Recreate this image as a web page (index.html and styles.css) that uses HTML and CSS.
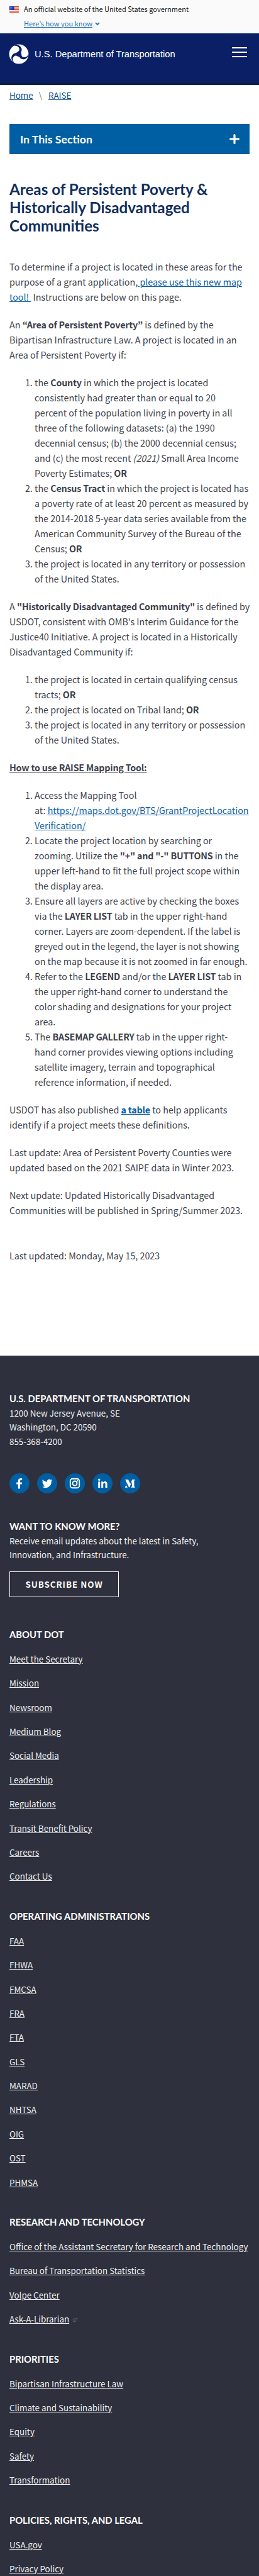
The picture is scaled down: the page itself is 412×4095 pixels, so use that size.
FILE: index.html
```html
<!DOCTYPE html>
<html lang="en">
<head>
<meta charset="utf-8">
<meta name="viewport" content="width=device-width, initial-scale=1">
<title>Areas of Persistent Poverty &amp; Historically Disadvantaged Communities</title>
<link rel="stylesheet" href="styles.css">
</head>
<body>
<div class="banner">
  <svg class="flag" viewBox="0 0 15 11"><rect width="15" height="11" fill="#fff"/><path d="M0 .6h15M0 2.9h15M0 5.2h15M0 7.7h15M0 10.2h15" stroke="#db3e1f" stroke-width="1.4"/><rect width="7.5" height="6" fill="#1e33b1"/><path d="M1 1.5h6M1 3h6M1 4.5h6" stroke="#9aa6e0" stroke-width=".6" stroke-dasharray="1 1"/></svg>
  <div class="banner-text">
    <p class="official">An official website of the United States government</p>
    <a class="know" href="#"><span>Here’s how you know</span><svg viewBox="0 0 8 6"><path d="M1 1.2l3 3 3-3" fill="none" stroke="#2672b5" stroke-width="1.9"/></svg></a>
  </div>
</div>
<header class="header">
  <a class="brand" href="#">
    <svg class="logo" viewBox="-16 -16 32 32"><defs><path id="arm" d="M-4.2 2.6C-5-1.5 2-4 .6-8.8C-.3-12-3.5-13.8-8.1-13.1C-3-16 2.4-13.6 4.1-9.5C5.8-5.2 2.2-3.3 4.6 1.4Z"/></defs><circle r="15.4" fill="#fff"/><g fill="#0a1f66"><use href="#arm"/><use href="#arm" transform="rotate(120)"/><use href="#arm" transform="rotate(240)"/></g></svg>
    <span>U.S. Department of Transportation</span>
  </a>
  <button class="menu" aria-label="Menu"><i></i><i></i><i></i></button>
</header>
<nav class="crumbs"><a href="#">Home</a><span>\</span><a href="#">RAISE</a></nav>
<div class="section-bar"><span>In This Section</span><svg viewBox="0 0 16 16"><path d="M8 1.600v12.800M1.600 8h12.800" stroke="#fff" stroke-width="3.200" stroke-linecap="round"/></svg></div>
<main class="content">
  <h1>Areas of Persistent Poverty &amp; Historically Disadvantaged Communities</h1>
  <p>To determine if a project is located in these areas for the<br>purpose of a grant application,<a href="#">&nbsp;please use this new map<br>tool!&nbsp;</a>&nbsp;Instructions are below on this page.</p>
  <p>An <b>“Area of Persistent Poverty”</b> is defined by the<br>Bipartisan Infrastructure Law. A project is located in an<br>Area of Persistent Poverty if:</p>
  <ol>
    <li>the <b>County</b> in which the project is located<br>consistently had greater than or equal to 20<br>percent of the population living in poverty in all<br>three of the following datasets: (a) the 1990<br>decennial census; (b) the 2000 decennial census;<br>and (c) the most recent <em>(2021)</em> Small Area Income<br>Poverty Estimates; <b>OR</b></li>
    <li>the <b>Census Tract</b> in which the project is located has<br>a poverty rate of at least 20 percent as measured by<br>the 2014-2018 5-year data series available from the<br>American Community Survey of the Bureau of the<br>Census; <b>OR</b></li>
    <li>the project is located in any territory or possession<br>of the United States.</li>
  </ol>
  <p>A <b>"Historically Disadvantaged Community"</b> is defined by<br>USDOT, consistent with OMB's Interim Guidance for the<br>Justice40 Initiative. A project is located in a Historically<br>Disadvantaged Community if:</p>
  <ol>
    <li>the project is located in certain qualifying census<br>tracts; <b>OR</b></li>
    <li>the project is located on Tribal land; <b>OR</b></li>
    <li>the project is located in any territory or possession<br>of the United States.</li>
  </ol>
  <p><b><u>How to use RAISE Mapping Tool:</u></b></p>
  <ol>
    <li>Access the Mapping Tool<br>at: <a href="#">https://maps.dot.gov/BTS/GrantProjectLocation<br>Verification/</a></li>
    <li>Locate the project location by searching or<br>zooming. Utilize the <b>"+" and "-" BUTTONS</b> in the<br>upper left-hand to fit the full project scope within<br>the display area.</li>
    <li>Ensure all layers are active by checking the boxes<br>via the <b>LAYER LIST</b> tab in the upper right-hand<br>corner. Layers are zoom-dependent. If the label is<br>greyed out in the legend, the layer is not showing<br>on the map because it is not zoomed in far enough.</li>
    <li>Refer to the <b>LEGEND</b> and/or the <b>LAYER LIST</b> tab in<br>the upper right-hand corner to understand the<br>color shading and designations for your project<br>area.</li>
    <li>The <b>BASEMAP GALLERY</b> tab in the upper right-<br>hand corner provides viewing options including<br>satellite imagery, terrain and topographical<br>reference information, if needed.</li>
  </ol>
  <p>USDOT has also published <a href="#"><b>a table</b></a> to help applicants<br>identify if a project meets these definitions.</p>
  <p>Last update: Area of Persistent Poverty Counties were<br>updated based on the 2021 SAIPE data in Winter 2023.</p>
  <p>Next update: Updated Historically Disadvantaged<br>Communities will be published in Spring/Summer 2023.</p>
  <p class="updated">Last updated: Monday, May 15, 2023</p>
</main>
<footer class="footer">
  <h2>U.S. Department of Transportation</h2>
  <p>1200 New Jersey Avenue, SE<br>Washington, DC 20590<br>855-368-4200</p>
  <div class="social">
    <a href="#" aria-label="Facebook"><svg viewBox="0 0 32 32"><path d="M13.8 24.5V17.4h-2.6v-3h2.6v-2.3c0-2.7 1.6-4.1 4-4.1 1.1 0 2 .1 2.4.2v2.7h-1.6c-1.3 0-1.6.6-1.6 1.500v2h3.1l-.4 3H17v7.1z"/></svg></a>
    <a href="#" aria-label="Twitter"><svg viewBox="0 0 32 32"><path d="M24.4 11.1c-.6.3-1.3.5-2 .6.7-.4 1.2-1.1 1.5-1.9-.7.4-1.4.7-2.2.8a3.4 3.4 0 0 0-5.8 3.1c-2.8-.1-5.3-1.5-7-3.6-.9 1.6-.5 3.6 1 4.6-.5 0-1.1-.2-1.5-.4 0 1.7 1.2 3.1 2.7 3.4-.5.1-1 .2-1.5.1.4 1.4 1.7 2.3 3.2 2.4A6.9 6.9 0 0 1 7.7 21.600a9.7 9.7 0 0 0 15-8.700c.7-.5 1.200-1.100 1.700-1.800z"/></svg></a>
    <a href="#" aria-label="Instagram"><svg viewBox="0 0 32 32"><g fill="none" stroke="#fff" stroke-width="1.900"><rect x="8.800" y="8.800" width="14.400" height="14.400" rx="3.500"/><circle cx="16" cy="16" r="3.500"/></g><circle cx="20.100" cy="11.900" r="1.100"/></svg></a>
    <a href="#" aria-label="LinkedIn"><svg viewBox="0 0 32 32"><path d="M9.200 13.300h3V23h-3zM14.200 13.300h2.900v1.300c.5-.9 1.500-1.600 3-1.600 2.800 0 3.500 1.700 3.500 4.300V23h-3v-5.100c0-1.300-.2-2.500-1.600-2.500s-1.800 1-1.800 2.400V23h-3z"/><circle cx="10.700" cy="10.300" r="1.800"/></svg></a>
    <a href="#" aria-label="Medium"><svg viewBox="0 0 32 32"><path d="M8.300 10h4.700l3.300 7 3-7h4.500v.8l-1.400 1.100v8.900l1.400 1.100v.8h-6.400v-.8l1.500-1.100v-7.400l-4 9.200h-.7l-4.200-9.200v6.300l1.700 2.200v.8H7.900v-.8l1.600-2.200v-7.800l-1.200-1.100z"/></svg></a>
  </div>
  <h2>Want To Know More?</h2>
  <p>Receive email updates about the latest in Safety,<br>Innovation, and Infrastructure.</p>
  <a class="subscribe" href="#">SUBSCRIBE NOW</a>
  <section class="links">
    <h2>About DOT</h2>
    <ul><li><a href="#">Meet the Secretary</a></li><li><a href="#">Mission</a></li><li><a href="#">Newsroom</a></li><li><a href="#">Medium Blog</a></li><li><a href="#">Social Media</a></li><li><a href="#">Leadership</a></li><li><a href="#">Regulations</a></li><li><a href="#">Transit Benefit Policy</a></li><li><a href="#">Careers</a></li><li><a href="#">Contact Us</a></li></ul>
  </section>
  <section class="links">
    <h2>Operating Administrations</h2>
    <ul><li><a href="#">FAA</a></li><li><a href="#">FHWA</a></li><li><a href="#">FMCSA</a></li><li><a href="#">FRA</a></li><li><a href="#">FTA</a></li><li><a href="#">GLS</a></li><li><a href="#">MARAD</a></li><li><a href="#">NHTSA</a></li><li><a href="#">OIG</a></li><li><a href="#">OST</a></li><li><a href="#">PHMSA</a></li></ul>
  </section>
  <section class="links">
    <h2>Research and Technology</h2>
    <ul><li><a href="#">Office of the Assistant Secretary for Research and Technology</a></li><li><a href="#">Bureau of Transportation Statistics</a></li><li><a href="#">Volpe Center</a></li><li><a href="#">Ask-A-Librarian</a><svg class="ext" viewBox="0 0 10 8"><path d="M5 2H1.500v5h5V4.500M4 4.500L8 1M6 1h2.500v2.500" fill="none" stroke="#5f636e" stroke-width="1"/></svg></li></ul>
  </section>
  <section class="links">
    <h2>Priorities</h2>
    <ul><li><a href="#">Bipartisan Infrastructure Law</a></li><li><a href="#">Climate and Sustainability</a></li><li><a href="#">Equity</a></li><li><a href="#">Safety</a></li><li><a href="#">Transformation</a></li></ul>
  </section>
  <section class="links">
    <h2>Policies, Rights, and Legal</h2>
    <ul><li><a href="#">USA.gov</a></li><li><a href="#">Privacy Policy</a></li></ul>
  </section>
</footer>
</body>
</html>
```
FILE: styles.css
```css
* { box-sizing: border-box; }
body {
  margin: 0;
  height: 4095px;
  overflow: hidden;
  background: #fff;
  color: #3d3f4c;
  font: 14.3px/24px "Noto Sans CJK KR", "Noto Sans", sans-serif;
}
p, h1, h2, ul, ol { margin: 0; padding: 0; }
a { color: #0b5fa5; }
b { letter-spacing: -.2px; }
.banner { display: flex; gap: 8px; height: 53px; padding: 0 15px; background: #fafafa; }
.flag { width: 15px; height: 11px; margin-top: 10px; }
.banner-text { padding-top: 3px; line-height: 23px; }
.official { color: #1b1b1b; font-size: 11.05px; }
.know { display: flex; align-items: center; gap: 4px; font-size: 11.05px; color: #2672b5; text-decoration: none; }
.know span { text-decoration: underline; }
.know svg { width: 8px; height: 6px; }
.header {
  display: flex;
  justify-content: space-between;
  height: 82px;
  padding: 17px 19px 0 14px;
  background: #0a1f66;
  border-bottom: 4px solid #0b2048;
}
.brand {
  display: flex;
  align-items: center;
  gap: 9px;
  height: 32px;
  color: #fff;
  font: 14.69px/20px "Liberation Sans", Arial, sans-serif;
  text-decoration: none;
}
.logo { width: 32px; height: 32px; }
.menu { display: flex; flex-direction: column; gap: 5px; margin: 5px 0 0; padding: 0; border: 0; background: none; }
.menu i { width: 24px; height: 2px; background: #fff; }
.crumbs { display: flex; gap: 9px; padding: 4px 15px 0; height: 62px; font-size: 13.4px; }
.crumbs a { color: #0b4d8a; }
.crumbs span { color: #777; padding-right: 1px; }
.section-bar {
  display: flex;
  align-items: center;
  justify-content: space-between;
  height: 48px;
  margin: 0 15px;
  padding: 0 16px 0 17px;
  background: #005ea2;
  color: #fff;
  font: bold 17.7px/24px Lato, sans-serif;
}
.section-bar span { padding-top: 2px; }
.section-bar svg { width: 16px; height: 16px; }
.content { padding: 42px 15px 0; height: 1910px; }
h1 { margin-bottom: 39px; color: #112f5e; font: bold 24.2px/28.8px Lato, sans-serif; }
.content p, .content ol { margin-bottom: 20px; white-space: nowrap; }
.content ol { padding-left: 40px; }
.content .updated { margin-top: 48px; }
.footer {
  height: 1940px;
  padding: 56px 15px 0;
  background: #2e303d;
  color: #f0f0f2;
  font-size: 13.4px;
  line-height: 22.4px;
}
.footer h2 { font: bold 14.8px/24px Lato, sans-serif; text-transform: uppercase; color: #fff; }
.social { display: flex; gap: 12px; margin: 40px 0 39.6px; }
.social a { width: 32px; height: 32px; border-radius: 50%; background: #005ea2; }
.social svg { display: block; width: 32px; height: 32px; fill: #fff; }
.subscribe {
  display: flex;
  align-items: center;
  justify-content: center;
  width: 174px;
  height: 41px;
  margin: 15px 0 47.2px;
  border: 1px solid #fff;
  color: #fff;
  font-weight: bold;
  letter-spacing: .95px;
  text-decoration: none;
}
.links { margin-bottom: 40px; }
.links h2 { margin-bottom: 16px; }
.links ul { display: grid; gap: 16px; list-style: none; }
.links li { height: 22.4px; white-space: nowrap; }
.footer .links a { color: #f0f0f2; }
.ext { width: 9px; height: 8px; margin-left: 5px; }
```
